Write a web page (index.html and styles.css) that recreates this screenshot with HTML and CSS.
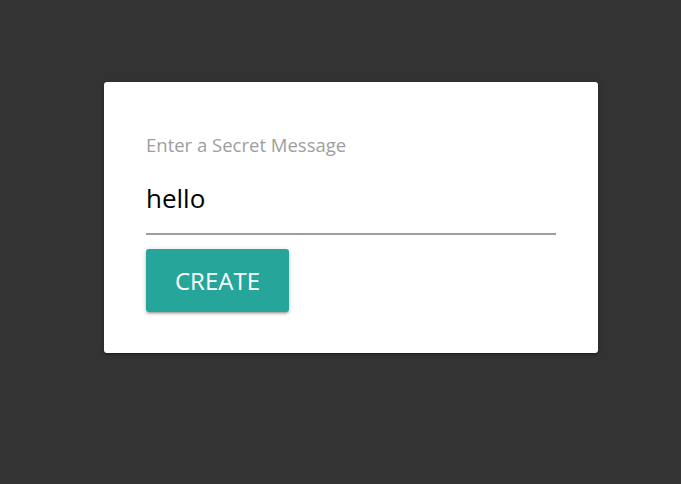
FILE: index.html
```html
<!DOCTYPE html>
<html>
<head>
<meta charset="utf-8">
<link rel="stylesheet" href="styles.css">
</head>
<body>
<div class="card">
  <div class="label">Enter a Secret Message</div>
  <div class="input">hello</div>
  <button class="btn">CREATE</button>
</div>
</body>
</html>
```
FILE: styles.css
```css
html, body {
  margin: 0;
  padding: 0;
  background: #333333;
  height: 100%;
}
body {
  font-family: "Open Sans", "Noto Sans", sans-serif;
  display: flex;
  flex-direction: column;
  align-items: flex-start;
}
.card {
  box-sizing: border-box;
  width: 494px;
  margin: 82px 0 0 104px;
  padding: 51px 42px 41px 42px;
  background: #ffffff;
  border-radius: 3px;
  box-shadow: 0 2px 2px 0 rgba(0,0,0,0.14), 0 3px 1px -2px rgba(0,0,0,0.12), 0 1px 5px 0 rgba(0,0,0,0.2);
  display: flex;
  flex-direction: column;
  align-items: flex-start;
}
.label {
  font-size: 18.5px;
  line-height: 24px;
  color: #9e9e9e;
}
.input {
  align-self: stretch;
  margin-top: 23px;
  font-size: 26px;
  line-height: 36px;
  color: #000;
  padding-bottom: 17px;
  border-bottom: 2px solid #9e9e9e;
}
.btn {
  margin-top: 14px;
  height: 63px;
  padding: 0 29px;
  border: none;
  border-radius: 3px;
  background: #26a69a;
  color: #fff;
  font-family: "Open Sans", "Noto Sans", sans-serif;
  font-size: 24px;
  line-height: 63px;
  box-shadow: 0 2px 2px 0 rgba(0,0,0,0.14), 0 3px 1px -2px rgba(0,0,0,0.12), 0 1px 5px 0 rgba(0,0,0,0.2);
}
```
